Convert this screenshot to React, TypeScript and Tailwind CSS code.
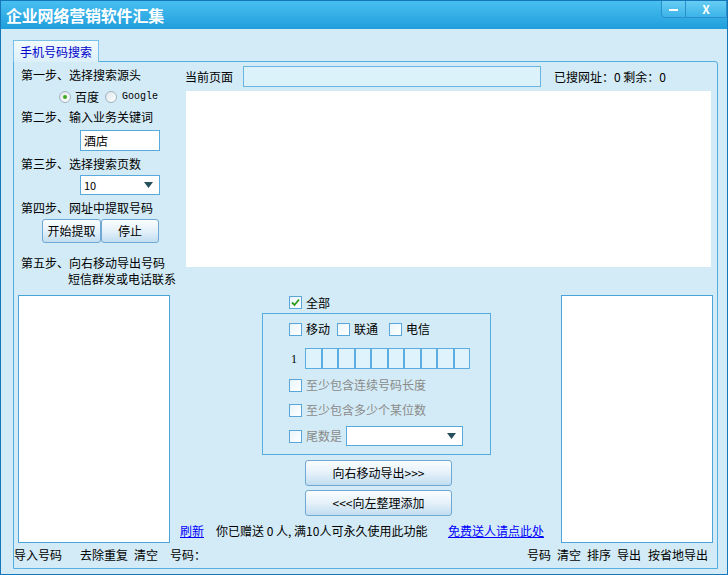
import React from 'react'

const font = { fontFamily: '"Noto Sans CJK SC", "Noto Sans", sans-serif' }

const CheckBox = ({ checked = false }: { checked?: boolean }) => (
  <span className="w-[13px] h-[13px] shrink-0 border border-[#5aa6d8] bg-gradient-to-br from-[#e9f5fb] to-[#ffffff] flex items-center justify-center">
    {checked && (
      <svg width="9" height="9" viewBox="0 0 9 9">
        <path d="M1 4.5 L3.5 7 L8 1.5" stroke="#2f9a17" strokeWidth="1.8" fill="none" />
      </svg>
    )}
  </span>
)

const Radio = ({ checked = false }: { checked?: boolean }) => (
  <span className="w-[12px] h-[12px] rounded-full border border-[#9fb4c0] bg-gradient-to-br from-[#dfe6ea] to-[#ffffff] flex items-center justify-center">
    {checked && <span className="w-[4px] h-[4px] rounded-full bg-[#3eaa1e]" />}
  </span>
)

const Caret = () => (
  <svg width="9" height="6" viewBox="0 0 9 6">
    <path d="M0 0 H9 L4.5 6 Z" fill="#25505c" />
  </svg>
)

const Btn = ({ children, className = '' }: { children: React.ReactNode; className?: string }) => (
  <button className={`flex items-center justify-center rounded-[3px] border border-[#6fa9d3] bg-gradient-to-b from-[#fbfdfe] via-[#e4f1fa] to-[#c2ddf0] text-black text-[12px] ${className}`}>
    {children}
  </button>
)

export default function App() {
  return (
    <div style={font} className="w-[728px] h-[575px] bg-[#d3ebf6] border border-[#1576b8] flex flex-col text-[12px] text-black leading-none overflow-hidden">
      {/* title bar */}
      <div className="relative h-[28px] shrink-0 bg-gradient-to-b from-[#47bff0] to-[#1f9edc] flex items-center pl-[5px]">
        <span className="text-white text-[16px] font-bold tracking-[-0.2px]">企业网络营销软件汇集</span>
        <div className="absolute top-[-1px] right-0 flex">
          <div className="w-[25px] h-[18px] rounded-bl-[4px] border border-[#2a8fca] bg-gradient-to-b from-[#66cdf4] to-[#3ab3e8] flex items-center justify-center">
            <span className="w-[9px] h-[2px] bg-white mt-[2px]" />
          </div>
          <div className="w-[41px] h-[18px] border border-l-0 border-[#2a8fca] bg-gradient-to-b from-[#66cdf4] to-[#3ab3e8] flex items-center justify-center text-white font-bold text-[12px]">
            X
          </div>
        </div>
      </div>

      {/* tab strip */}
      <div className="pl-[12px] pt-[10px] h-[32px] shrink-0 flex items-end">
        <div className="h-[22px] px-[6px] border border-b-0 border-[#79bfe6] bg-gradient-to-b from-[#f2fafd] to-[#dcf0fa] text-[#0000cc] flex items-center relative top-[1px]">
          手机号码搜索
        </div>
      </div>

      {/* tab panel */}
      <div className="ml-[12px] w-[705px] h-[508px] border border-[#55ade0] rounded-tr-[3px] flex flex-col">
        {/* top */}
        <div className="h-[233px] flex">
          <div className="w-[166px] pl-[7px] flex flex-col">
            <div className="mt-[4px] h-[18px] flex items-center">第一步、选择搜索源头</div>
            <div className="mt-[4px] h-[18px] flex items-center pl-[38px]">
              <Radio checked />
              <span className="ml-[4px]">百度</span>
              <span className="ml-[6px]"><Radio /></span>
              <span className="ml-[5px] text-[10px]" style={{ fontFamily: '"Liberation Mono", monospace' }}>Google</span>
            </div>
            <div className="mt-[2px] h-[18px] flex items-center">第二步、输入业务关键词</div>
            <div className="mt-[4px] ml-[59px] w-[80px] h-[21px] bg-white border border-[#58a9dc] flex items-center pl-[3px]">酒店</div>
            <div className="mt-[4px] h-[18px] flex items-center">第三步、选择搜索页数</div>
            <div className="mt-[2px] ml-[59px] w-[80px] h-[20px] bg-white border border-[#58a9dc] flex items-center justify-between pl-[3px] pr-[6px]">
              <span className="text-[11px]">10</span>
              <Caret />
            </div>
            <div className="mt-[4px] h-[18px] flex items-center">第四步、网址中提取号码</div>
            <div className="mt-[2px] ml-[21px] flex">
              <Btn className="w-[59px] h-[24px]">开始提取</Btn>
              <Btn className="w-[58px] h-[24px]">停止</Btn>
            </div>
            <div className="mt-[11px] h-[18px] flex items-center">第五步、向右移动导出号码</div>
            <div className="mt-[-2px] ml-[47px] h-[18px] flex items-center">短信群发或电话联系</div>
          </div>
          <div className="flex-1 pl-[5px] pr-[5px] flex flex-col">
            <div className="mt-[4px] h-[21px] flex items-center">
              <span className="w-[58px]">当前页面</span>
              <div className="w-[298px] h-[21px] border border-[#6ab6e2] bg-[#dcf2fb]" />
              <span className="ml-[13px]">已搜网址：0 剩余：0</span>
            </div>
            <div className="mt-[4px] ml-[1px] w-[525px] h-[176px] bg-white" />
          </div>
        </div>

        {/* middle */}
        <div className="h-[248px] flex px-[4px]">
          <div className="w-[152px] h-full bg-white border border-[#4ba4da]" />
          <div className="flex-1 flex flex-col">
            <div className="mt-[1px] ml-[119px] h-[13px] flex items-center">
              <CheckBox checked />
              <span className="ml-[4px]">全部</span>
            </div>
            <div className="mt-[4px] ml-[92px] w-[229px] h-[142px] border border-[#55ade0] flex flex-col pl-[26px]">
              <div className="mt-[8px] h-[14px] flex items-center">
                <CheckBox />
                <span className="ml-[4px]">移动</span>
                <span className="ml-[7px]"><CheckBox /></span>
                <span className="ml-[4px]">联通</span>
                <span className="ml-[11px]"><CheckBox /></span>
                <span className="ml-[4px]">电信</span>
              </div>
              <div className="mt-[12px] h-[21px] flex items-center">
                <span className="w-[16px] pl-[2px] text-[12px]" style={{ fontFamily: '"Liberation Serif", serif' }}>1</span>
                <div className="w-[165px] h-[21px] grid grid-cols-10">
                  {Array.from({ length: 10 }).map((_, i) => (
                    <div key={i} className="border border-[#5daee0] bg-[#dff3fc]" />
                  ))}
                </div>
              </div>
              <div className="mt-[9px] h-[14px] flex items-center text-[#8a8a8a]">
                <CheckBox />
                <span className="ml-[4px]">至少包含连续号码长度</span>
              </div>
              <div className="mt-[11px] h-[14px] flex items-center text-[#8a8a8a]">
                <CheckBox />
                <span className="ml-[4px]">至少包含多少个某位数</span>
              </div>
              <div className="mt-[9px] h-[20px] flex items-center text-[#8a8a8a]">
                <CheckBox />
                <span className="ml-[4px]">尾数是</span>
                <div className="ml-[4px] w-[117px] h-[20px] bg-white border border-[#58a9dc] flex items-center justify-end pr-[6px]">
                  <Caret />
                </div>
              </div>
            </div>
            <Btn className="mt-[5px] ml-[135px] w-[147px] h-[26px]">向右移动导出&gt;&gt;&gt;</Btn>
            <Btn className="mt-[4px] ml-[135px] w-[147px] h-[26px]">&lt;&lt;&lt;向左整理添加</Btn>
            <div className="mt-[7px] h-[16px] flex items-center pl-[10px]">
              <span className="text-[#0000ff] underline">刷新</span>
              <span className="ml-[12px]">你已赠送 0 人, 满10人可永久使用此功能</span>
              <span className="ml-auto mr-[17px] text-[#0000ff] underline">免费送人请点此处</span>
            </div>
          </div>
          <div className="w-[152px] h-full bg-white border border-[#4ba4da]" />
        </div>

        {/* bottom */}
        <div className="flex-1 flex items-center pb-[1px]">
          <span>导入号码</span>
          <span className="ml-[18px]">去除重复</span>
          <span className="ml-[6px]">清空</span>
          <span className="ml-[12px]">号码：</span>
          <div className="ml-auto mr-[9px] flex gap-[6px]">
            <span>号码</span>
            <span>清空</span>
            <span>排序</span>
            <span>导出</span>
            <span className="ml-[1px]">按省地导出</span>
          </div>
        </div>
      </div>
    </div>
  )
}
